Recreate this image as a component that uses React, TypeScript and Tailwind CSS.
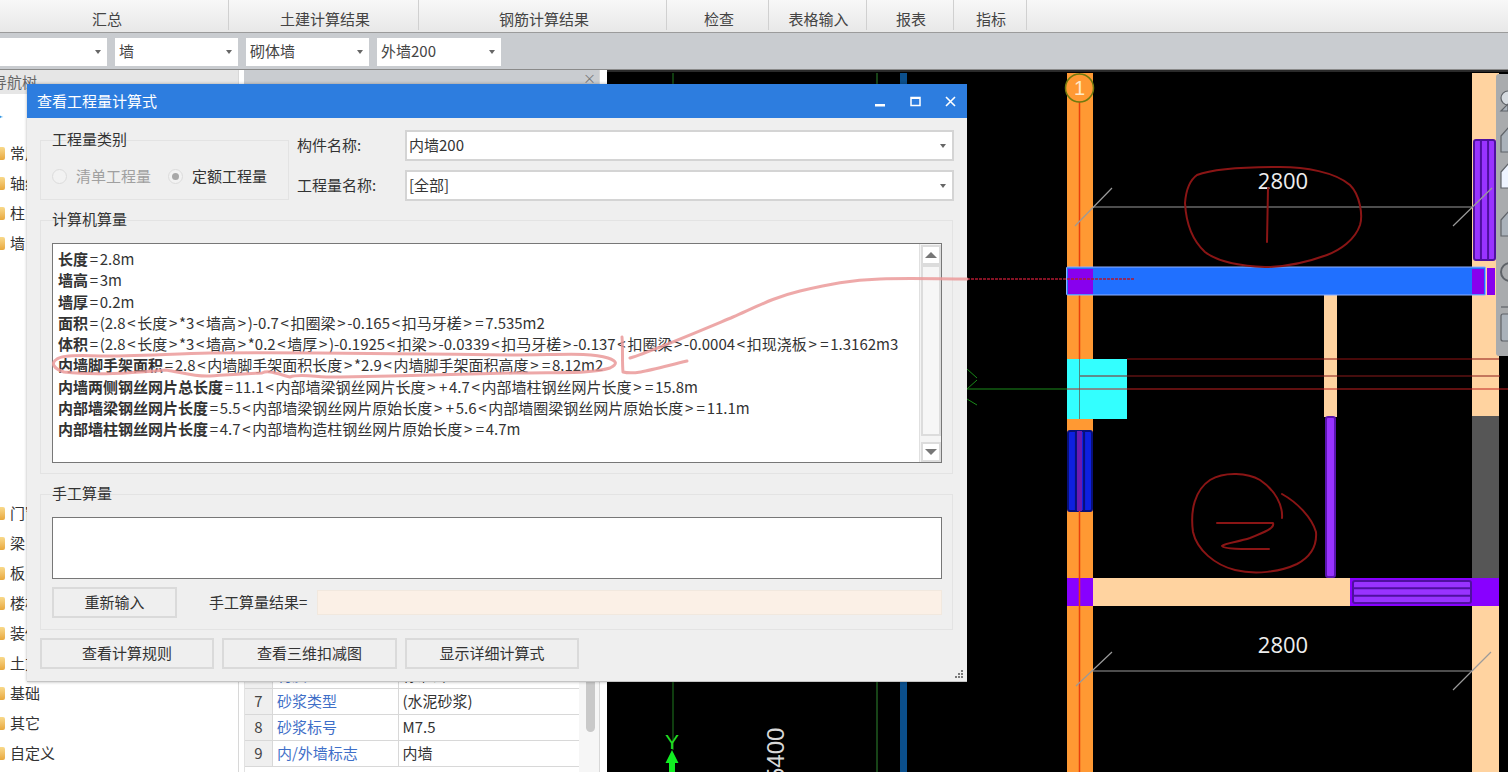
import React from "react";

const tabs = [
  { label: "汇总", w: "w-[229px]", pr: "pr-[14px]" },
  { label: "土建计算结果", w: "w-[190px]", pr: "pl-[3px]" },
  { label: "钢筋计算结果", w: "w-[248px]", pr: "pl-[3px]" },
  { label: "检查", w: "w-[102px]", pr: "pl-[3px]" },
  { label: "表格输入", w: "w-[98px]", pr: "pl-[2px]" },
  { label: "报表", w: "w-[87px]", pr: "pl-[2px]" },
  { label: "指标", w: "w-[73px]", pr: "pl-[2px]" },
];

const lines: [string, string][] = [
  ["长度", "=2.8m"],
  ["墙高", "=3m"],
  ["墙厚", "=0.2m"],
  ["面积", "=(2.8<长度>*3<墙高>)-0.7<扣圈梁>-0.165<扣马牙槎>=7.535m2"],
  ["体积", "=(2.8<长度>*3<墙高>*0.2<墙厚>)-0.1925<扣梁>-0.0339<扣马牙槎>-0.137<扣圈梁>-0.0004<扣现浇板>=1.3162m3"],
  ["内墙脚手架面积", "=2.8<内墙脚手架面积长度>*2.9<内墙脚手架面积高度>=8.12m2"],
  ["内墙两侧钢丝网片总长度", "=11.1<内部墙梁钢丝网片长度>+4.7<内部墙柱钢丝网片长度>=15.8m"],
  ["内部墙梁钢丝网片长度", "=5.5<内部墙梁钢丝网片原始长度>+5.6<内部墙圈梁钢丝网片原始长度>=11.1m"],
  ["内部墙柱钢丝网片长度", "=4.7<内部墙构造柱钢丝网片原始长度>=4.7m"],
];

function Formula({ text }: { text: string }) {
  return (
    <>
      {text.split(/([<>=+])/).map((part, i) =>
        i % 2 === 1 ? (
          <span key={i} className="mx-[1.7px]">{part}</span>
        ) : (
          <span key={i}>{part}</span>
        )
      )}
    </>
  );
}

function Caret() {
  return <span className="w-0 h-0 border-x-[3.5px] border-x-transparent border-t-[4px] border-t-[#666]" />;
}

function ToolSelect({ w, text }: { w: string; text: string }) {
  return (
    <div className={`${w} h-[28px] bg-white flex items-center justify-between pl-[4px] pr-[6px] pb-[1px] text-[15px] text-[#444]`}>
      <span>{text}</span>
      <Caret />
    </div>
  );
}

function Folder() {
  return <span className="block w-[14px] h-[13px] -ml-[9px] rounded-[2px] bg-gradient-to-b from-[#f8d98a] to-[#e8a83c]" />;
}

function TreeItem({ label }: { label: string }) {
  return (
    <div className="h-[30px] flex items-center gap-[5px] text-[15px] text-[#333] whitespace-nowrap">
      <Folder />
      <span>{label}</span>
    </div>
  );
}

function PropRow({ n, name, value }: { n: string; name: string; value: string }) {
  return (
    <div className="flex h-[26px] shrink-0 border-b border-[#d8d8d8] text-[15px] items-stretch">
      <div className="w-[28px] bg-[#efefef] flex items-center justify-center text-[#444] border-r border-[#d8d8d8]">{n}</div>
      <div className="w-[126px] pl-[4px] flex items-center text-[#3f6fc8] border-r border-[#d8d8d8]">{name}</div>
      <div className="w-[181px] pl-[4px] flex items-center text-[#333]">{value}</div>
    </div>
  );
}

function DlgSelect({ text }: { text: string }) {
  return (
    <div className="w-[549px] h-[31px] bg-white border-2 border-[#d4d4d4] flex items-center justify-between pl-[2px] pr-[6px] text-[15px] text-[#333]">
      <span>{text}</span>
      <Caret />
    </div>
  );
}

function Group({ title, className, children }: { title: string; className: string; children?: React.ReactNode }) {
  return (
    <div className={`relative border border-[#e3e3e3] ${className}`}>
      <span className="absolute left-[11px] -top-[12px] text-[15px] leading-[20px] text-[#333]">{title}</span>
      {children}
    </div>
  );
}

function Btn({ w, text }: { w: string; text: string }) {
  return (
    <div className={`${w} h-[31px] border-2 border-[#dadada] bg-[#efefef] flex items-center justify-center text-[15px] text-[#333]`}>
      {text}
    </div>
  );
}

function Radio({ on }: { on?: boolean }) {
  return (
    <span className="w-[15px] h-[15px] rounded-full border border-[#dcdcdc] bg-[#f2f2f2] flex items-center justify-center">
      {on && <span className="w-[7px] h-[7px] rounded-full bg-[#a8a8a8]" />}
    </span>
  );
}

function Scrollbar() {
  return (
    <div className="absolute right-0 top-0 bottom-0 w-[22px] bg-[#f4f4f4] border-l border-[#e0e0e0] flex flex-col items-center pt-[1px]">
      <div className="w-[20px] h-[20px] bg-white border-2 border-[#dcdcdc] flex items-center justify-center">
        <span className="w-0 h-0 border-x-[6px] border-x-transparent border-b-[6px] border-b-[#777]" />
      </div>
      <div className="w-[20px] h-[171px] bg-[#f6f6f6] border-2 border-[#dcdcdc]" />
      <div className="w-[20px] h-[6px]" />
      <div className="w-[20px] h-[20px] bg-white border-2 border-[#dcdcdc] flex items-center justify-center">
        <span className="w-0 h-0 border-x-[6px] border-x-transparent border-t-[6px] border-t-[#777]" />
      </div>
    </div>
  );
}

function Stripes({ x, y, w, h, fill, stroke, vertical }: { x: number; y: number; w: number; h: number; fill: string; stroke: string; vertical: boolean }) {
  const a = [0.33, 0.67];
  return (
    <g>
      <rect x={x} y={y} width={w} height={h} rx={2} fill={fill} stroke={stroke} strokeWidth={2} />
      {a.map((t) =>
        vertical ? (
          <line key={t} x1={x + w * t} x2={x + w * t} y1={y - 1} y2={y + h + 1} stroke={stroke} strokeWidth={2} />
        ) : (
          <line key={t} y1={y + h * t} y2={y + h * t} x1={x - 1} x2={x + w + 1} stroke={stroke} strokeWidth={2} />
        )
      )}
    </g>
  );
}

function Canvas() {
  return (
    <svg viewBox="607 70 901 702" className="block w-full h-full">
      <rect x={607} y={70} width={901} height={702} fill="#000" />
      <rect x={607} y={70} width={901} height={2} fill="#2a2a2a" />
      <line x1={673} x2={673} y1={73} y2={750} stroke="#1f7a1f" strokeWidth={1} />
      <line x1={877} x2={877} y1={73} y2={772} stroke="#1f5a1f" strokeWidth={1.5} />
      <rect x={900} y={73} width={7} height={699} fill="#0b4f8c" />
      <text x={672} y={749} textAnchor="middle" fontSize={21} fill="#22dd22" fontFamily="Liberation Sans, sans-serif">Y</text>
      <path d="M672 750 L678.5 763 L675 763 L675 772 L669 772 L669 763 L665.5 763 Z" fill="#11ee22" />
      <text transform="translate(784 781) rotate(-90)" fontSize={24} fill="#d8d8d8" fontFamily="Liberation Sans, sans-serif">5400</text>

      {/* left wall */}
      <rect x={1067} y={73} width={26} height={699} fill="#ff9933" />
      {/* right wall */}
      <rect x={1472} y={73} width={27} height={699} fill="#ffd3a0" />
      <rect x={1472} y={416} width={27} height={162} fill="#565656" />
      {/* mid wall */}
      <rect x={1324} y={295} width={13} height={122} fill="#ffd3a0" />
      <rect x={1326} y={417} width={9} height={160} rx={2} fill="#9933ff" stroke="#5a14b0" strokeWidth={2} />
      {/* horizontal wall */}
      <rect x={1093} y={578} width={257} height={28} fill="#ffd3a0" />
      <rect x={1067} y={578} width={26} height={28} fill="#8800ff" />
      <rect x={1472} y={578} width={27} height={28} fill="#8800ff" />
      <rect x={1350} y={578} width={122} height={28} fill="#8800ff" />
      <Stripes x={1353} y={581} w={118} h={22} fill="#9933ff" stroke="#4f10a0" vertical={false} />
      {/* blue column */}
      <Stripes x={1068} y={431} w={24} h={80} fill="#0d20e0" stroke="#08107a" vertical />
      {/* right column */}
      <Stripes x={1474} y={140} w={21} h={120} fill="#9933ff" stroke="#4f10a0" vertical />
      {/* cyan */}
      <rect x={1067} y={359} width={60} height={60} fill="#33ffff" />
      <line x1={1079.5} x2={1079.5} y1={359} y2={419} stroke="#4d8a80" strokeWidth={1} />
      <rect x={1067} y={419} width={26} height={11} fill="#ff9933" />
      {/* center red line */}
      <line x1={1079.5} x2={1079.5} y1={73} y2={359} stroke="#e8400c" strokeWidth={1.5} />
      <line x1={1079.5} x2={1079.5} y1={511} y2={772} stroke="#e8400c" strokeWidth={1.5} />
      <line x1={1079.5} x2={1079.5} y1={431} y2={511} stroke="#6a1ab0" strokeWidth={5} />
      {/* red horizontal lines */}
      <line x1={1127} x2={1499} y1={359} y2={359} stroke="#8f1212" strokeWidth={1} />
      <line x1={1080} x2={1500} y1={376} y2={376} stroke="#8a1a1a" strokeWidth={1} />
      <line x1={967} x2={1067} y1={389} y2={389} stroke="#1a8a1a" strokeWidth={1} />
      <line x1={1067} x2={1508} y1={389} y2={389} stroke="#c02020" strokeWidth={1} />
      <path d="M967 369 L977 378 M967 389 L977 380 M967 399 L977 405" stroke="#1a8a1a" strokeWidth={1} fill="none" />
      {/* beam */}
      <rect x={1066.5} y={267} width={419} height={28} rx={1} fill="#2070ff" stroke="#8fb0ff" strokeWidth={1} />
      <rect x={1068} y={269} width={25} height={25} fill="#8800ee" />
      <rect x={1472} y={269} width={12} height={25} fill="#8800ee" />
      <rect x={1487} y={268} width={8} height={27} fill="#8800ee" />
      <line x1={967} x2={1135} y1={279} y2={279} stroke="#b01830" strokeWidth={1.5} strokeDasharray="3 1" />
      {/* axis */}
      <circle cx={1079.5} cy={88} r={14} fill="#ff9933" stroke="#6f7a10" strokeWidth={1.5} />
      <text x={1079.5} y={95} textAnchor="middle" fontSize={20} fill="#ffe9c8" fontFamily="Liberation Sans, sans-serif">1</text>
      {/* dims */}
      <g stroke="#9a9a9a" strokeWidth={1.2} fill="none">
        <line x1={1093} x2={1472} y1={207} y2={207} />
        <path d="M1075 226 L1112 188 M1453 226 L1492 188" />
        <line x1={1093} x2={1472} y1={671} y2={671} />
        <path d="M1076 686 L1112 652 M1453 690 L1491 652" />
      </g>
      <text x={1283} y={189} textAnchor="middle" fontSize={22} fill="#eeeeee" fontFamily="Open Sans, sans-serif">2800</text>
      <text x={1283} y={653} textAnchor="middle" fontSize={22} fill="#eeeeee" fontFamily="Open Sans, sans-serif">2800</text>
      {/* scribbles */}
      <g stroke="#8a1515" strokeWidth={2} fill="none" strokeLinecap="round" strokeLinejoin="round">
        <path d="M1197 175 C1215 168 1250 167 1280 167 C1305 167 1335 172 1350 185 C1360 195 1363 215 1360 225 C1355 240 1340 250 1327 255 C1305 263 1285 267 1265 267 C1240 266 1218 262 1205 252 C1192 240 1186 222 1185 203 C1186 190 1190 180 1197 175 Z" />
        <path d="M1268 188 L1267 242" />
        <path d="M1282 518 C1283 505 1275 490 1260 480 C1248 473 1225 471 1210 480 C1195 490 1190 510 1193 532 C1197 550 1215 565 1235 570 C1255 575 1280 572 1297 564 C1312 556 1317 545 1316 532 C1312 518 1298 503 1282 494" />
        <path d="M1217 523 L1273 523 C1275 528 1265 532 1250 538 C1238 542 1225 543 1222 546 C1225 550 1250 549 1269 549" />
      </g>
      {/* tool strip */}
      <rect x={1496} y={74} width={14} height={282} rx={3} fill="#a9abad" />
      <g stroke="#5f6368" strokeWidth={1.2} fill="#aab2ba">
        <circle cx={1508} cy={98} r={7} fill="#d5dadf" />
        <path d="M1501 111 L1508 104 L1508 111 Z" />
        <path d="M1501 136 L1508 128 L1510 128 L1510 152 L1501 152 Z" />
        <path d="M1501 172 L1508 164 L1510 164 L1510 188 L1501 188 Z" fill="#eef4ff" />
        <path d="M1501 220 L1508 212 L1510 212 L1510 236 L1501 236 Z" />
        <circle cx={1510} cy={272} r={9} fill="none" strokeWidth={2} />
        <line x1={1501} x2={1510} y1={307} y2={307} />
        <rect x={1501} y={314} width={12} height={27} rx={2} />
      </g>
    </svg>
  );
}

export default function App() {
  return (
    <div className="relative w-[1508px] h-[772px] overflow-hidden flex flex-col bg-white font-['Noto_Sans_CJK_SC','Noto_Sans',sans-serif] text-[#333]">
      {/* ribbon */}
      <div className="h-[33px] shrink-0 flex bg-gradient-to-b from-[#f8f8f8] to-[#e8e8e8] border-b border-[#9b9b9b]">
        {tabs.map((t) => (
          <div key={t.label} className={`${t.w} ${t.pr} h-[30px] border-r border-[#d0d0d0] pt-[9px] flex items-center justify-center text-[15px] text-[#444]`}>
            {t.label}
          </div>
        ))}
      </div>
      {/* toolbar */}
      <div className="h-[37px] shrink-0 bg-[#c9ccd0] flex gap-[8px] items-start pt-[5px] border-b border-[#8a8a8a]">
        <ToolSelect w="w-[107px]" text="" />
        <ToolSelect w="w-[123px]" text="墙" />
        <ToolSelect w="w-[123px]" text="砌体墙" />
        <ToolSelect w="w-[124px]" text="外墙200" />
      </div>
      {/* main */}
      <div className="flex-1 flex min-h-0">
        <div className="w-[239px] shrink-0 border-r border-[#d8d8d8] flex flex-col overflow-hidden">
          <div className="h-[24px] bg-[#e6e6e6] -ml-[8px] text-[15px] text-[#666] leading-[24px] whitespace-nowrap">导航树</div>
          <div className="h-[44px] pt-[12px] -ml-[8px] text-[#3b7fd8] text-[14px]">✦</div>
          <TreeItem label="常用构件类型" />
          <TreeItem label="轴线" />
          <TreeItem label="柱" />
          <TreeItem label="墙" />
          <div className="h-[240px]" />
          <TreeItem label="门窗洞" />
          <TreeItem label="梁" />
          <TreeItem label="板" />
          <TreeItem label="楼梯" />
          <TreeItem label="装修" />
          <TreeItem label="土方" />
          <TreeItem label="基础" />
          <TreeItem label="其它" />
          <TreeItem label="自定义" />
        </div>
        <div className="w-[5px] shrink-0 bg-white" />
        <div className="w-[356px] shrink-0 border-r border-[#d8d8d8] flex flex-col overflow-hidden">
          <div className="h-[14px] shrink-0 bg-[#c9ccd0] relative">
            <span className="absolute right-[3px] top-[0px] text-[13px] leading-[16px] text-[#777]">×</span>
          </div>
          <div className="flex-1 flex min-h-0">
            <div className="flex-1 flex flex-col justify-end overflow-hidden border-l border-[#e2e2e2]">
              <PropRow n="6" name="材质" value="标准砖" />
              <PropRow n="7" name="砂浆类型" value="(水泥砂浆)" />
              <PropRow n="8" name="砂浆标号" value="M7.5" />
              <PropRow n="9" name="内/外墙标志" value="内墙" />
              <div className="h-[5px] shrink-0" />
            </div>
            <div className="w-[20px] shrink-0 bg-[#f6f6f6] pl-[7px] pt-[548px]">
              <div className="w-[9px] h-[100px] rounded-full bg-[#c9c9c9]" />
            </div>
          </div>
        </div>
        <div className="w-[7px] shrink-0 bg-white" />
        <div className="flex-1 min-w-0">
          <Canvas />
        </div>
      </div>

      {/* dialog */}
      <div className="absolute left-[27px] top-[84px] w-[940px] h-[598px] bg-[#efefef] border-b border-[#c4c4c4] flex flex-col shadow-[0_0_3px_rgba(0,0,0,0.3)]">
        <div className="h-[34px] shrink-0 bg-[#2d7ddf] flex items-center justify-between pl-[10px] pr-[11px] text-white text-[15px]">
          <span>查看工程量计算式</span>
          <div className="flex items-center gap-[24px]">
            <svg width="11" height="11" viewBox="0 0 11 11"><rect x="0" y="8" width="10" height="2.5" fill="#fff" /></svg>
            <svg width="11" height="11" viewBox="0 0 11 11"><rect x="1" y="1.5" width="9" height="8" fill="none" stroke="#fff" strokeWidth="1.5" /><rect x="1" y="1" width="9" height="2" fill="#fff" /></svg>
            <svg width="11" height="11" viewBox="0 0 11 11"><path d="M1 1 L10 10 M10 1 L1 10" stroke="#fff" strokeWidth="1.6" /></svg>
          </div>
        </div>
        <div className="flex-1 flex flex-col pl-[13px] pt-[12px]">
          <div className="flex">
            <Group title="工程量类别" className="w-[249px] h-[60px] mt-[10px] shrink-0">
              <div className="flex items-center h-full pt-[13px] pl-[11px] text-[15px] whitespace-nowrap">
                <Radio />
                <span className="ml-[9px] text-[#a0a0a0]">清单工程量</span>
                <span className="ml-[17px]"><Radio on /></span>
                <span className="ml-[9px] text-[#333]">定额工程量</span>
              </div>
            </Group>
            <div className="ml-[8px] flex flex-col gap-[9px]">
              <div className="flex items-center text-[15px]">
                <span className="w-[108px]">构件名称:</span>
                <DlgSelect text="内墙200" />
              </div>
              <div className="flex items-center text-[15px]">
                <span className="w-[108px]">工程量名称:</span>
                <DlgSelect text="[全部]" />
              </div>
            </div>
          </div>
          <Group title="计算机算量" className="w-[913px] h-[254px] mt-[19px] pl-[11px] pt-[22px] shrink-0">
            <div className="relative w-[890px] h-[220px] bg-white border border-[#777] pl-[5px] pt-[4px] text-[15px] leading-[21.25px] text-[#333] whitespace-nowrap">
              {lines.map(([b, r]) => (
                <div key={b}>
                  <b className="font-bold">{b}</b>
                  <Formula text={r} />
                </div>
              ))}
              <Scrollbar />
            </div>
          </Group>
          <Group title="手工算量" className="w-[913px] h-[136px] mt-[20px] pl-[11px] pt-[22px] shrink-0">
            <div className="w-[890px] h-[62px] bg-white border border-[#777]" />
            <div className="flex items-center mt-[8px]">
              <Btn w="w-[125px]" text="重新输入" />
              <span className="ml-[32px] w-[108px] text-[15px] whitespace-nowrap">手工算量结果=</span>
              <div className="w-[625px] h-[25px] bg-[#fbf0e6] border border-[#f1e8de]" />
            </div>
          </Group>
          <div className="flex gap-[8px] mt-[8px]">
            <Btn w="w-[174px]" text="查看计算规则" />
            <Btn w="w-[175px]" text="查看三维扣减图" />
            <Btn w="w-[174px]" text="显示详细计算式" />
          </div>
        </div>
        <svg className="absolute right-[3px] bottom-[2px]" width="10" height="10" viewBox="0 0 10 10" fill="#7a7a7a">
          <rect x="7" y="1" width="2" height="2" />
          <rect x="4" y="4" width="2" height="2" />
          <rect x="7" y="4" width="2" height="2" />
          <rect x="1" y="7" width="2" height="2" />
          <rect x="4" y="7" width="2" height="2" />
          <rect x="7" y="7" width="2" height="2" />
        </svg>
      </div>

      {/* pen marks lying over the dialog */}
      <svg className="absolute left-0 top-0 pointer-events-none" width="1508" height="772" viewBox="0 0 1508 772" fill="none">
        <g stroke="#eb9a9a" strokeWidth="3" strokeLinecap="round" strokeLinejoin="round" opacity="0.85">
          <path d="M630 358 C650 352 690 335 733 317 C760 305 775 297 800 291 C830 284 850 280 880 279 C910 278 940 279 967 279" />
          <path d="M622 337 C623 350 622 362 623 372 C635 375 650 370 687 361" />
          <path d="M100 356 C80 355 62 355 57 359 C50 363 54 369 64 372 C100 376 140 372 166 370 C180 372 195 377 210 376 C225 375 235 374 262 373 C268 370 275 373 290 377 C300 373 320 378 340 377 C400 376 470 374 514 373 C560 372 590 374 610 368 C618 364 617 361 608 358 C590 352 560 355 510 355 C420 354 300 352 210 353 C170 354 130 356 100 356 Z" />
        </g>
      </svg>
    </div>
  );
}
